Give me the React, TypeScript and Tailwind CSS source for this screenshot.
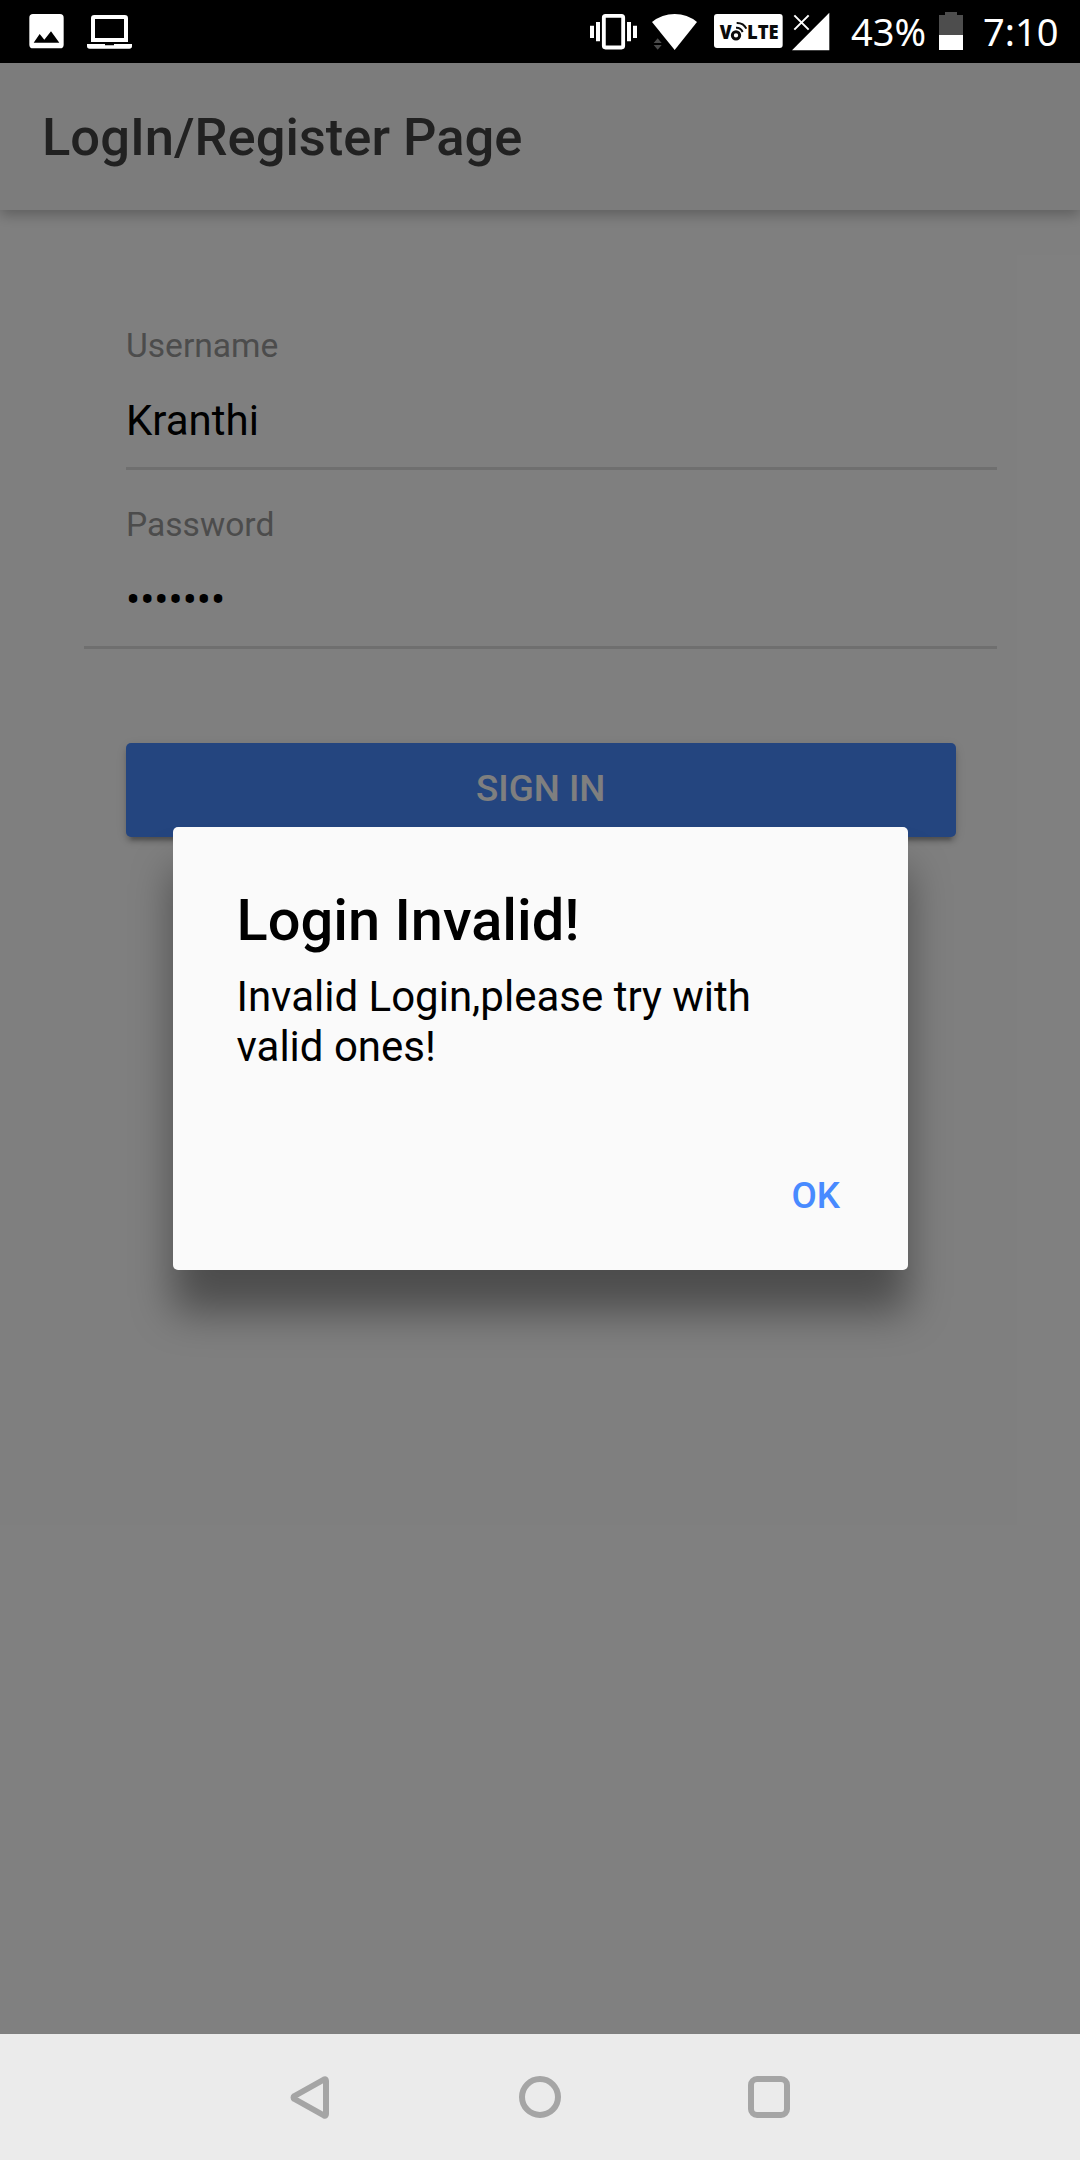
import type { ReactNode } from "react";

type GlyphProps = { viewBox: string; className: string; children: ReactNode };

function Glyph({ viewBox, className, children }: GlyphProps) {
  return (
    <svg viewBox={viewBox} className={`h-[63px] shrink-0 ${className}`} fill="#fff" aria-hidden="true">
      {children}
    </svg>
  );
}

function StatusBar() {
  return (
    <div className="flex h-[63px] items-center justify-between bg-black pl-[29px] pr-[21px] font-['Noto_Sans',sans-serif] text-[38px] leading-[63px] text-white">
      <div className="flex gap-[23px]">
        <Glyph viewBox="87 0 105 189" className="w-[35px]">
          <path
            fillRule="evenodd"
            d="M99 42H180Q191 42 191 53V134Q191 145 180 145H99Q88 145 88 134V53Q88 42 99 42ZM101 128H178L153 94L133 119L119 102Z"
          />
        </Glyph>
        <Glyph viewBox="261 0 135 189" className="w-[45px]">
          <path
            fillRule="evenodd"
            d="M283 45H374Q384 45 384 55V126H273V55Q273 45 283 45ZM285 57V114H372V57Z"
          />
          <path d="M261 132H315V136H342V132H396V138Q396 146 388 146H269Q261 146 261 138Z" />
        </Glyph>
      </div>
      <div className="flex">
        <Glyph viewBox="60 0 141 189" className="w-[47px]">
          <path d="M60 77h12v37h-12zM78 66h12v58h-12zM171 66h12v58h-12zM189 77h12v37h-12z" />
          <rect x="101.500" y="47.500" width="58" height="95" rx="5" fill="none" stroke="#fff" strokeWidth="11.500" />
        </Glyph>
        <Glyph viewBox="246 0 135 189" className="ml-[15px] w-[45px]">
          <path d="M246 66Q276 42 314 42Q352 42 381 66L314 150Z" />
          <path fill="#4a4a4a" stroke="#000" strokeWidth="3" paintOrder="stroke" d="M251 129L263 115L275 129ZM251 135H275L263 149Z" />
        </Glyph>
        <Glyph viewBox="432 0 207 189" className="ml-[17px] w-[69px]">
          <rect x="432" y="42" width="206" height="102" rx="9" />
          <g fill="#0b0b0b" fontFamily="Open Sans, sans-serif" fontWeight="800" fontSize="57">
            <text x="449" y="118" textLength="36" lengthAdjust="spacingAndGlyphs">V</text>
            <text x="531" y="118" textLength="95" lengthAdjust="spacingAndGlyphs">LTE</text>
          </g>
          <g fill="none" stroke="#0b0b0b">
            <circle cx="498" cy="106" r="11" strokeWidth="9" />
            <path strokeWidth="6" d="M498 83Q512 82 518 96M500 69Q520 68 529 86" />
          </g>
        </Glyph>
        <Glyph viewBox="666 0 114 189" className="ml-[9px] w-[38px]">
          <path d="M778 38V151H666Z" />
          <path fill="none" stroke="#fff" strokeWidth="6" d="M673 46L716 89M716 46L673 89" />
        </Glyph>
        <span className="ml-[21px] w-[76px]">43%</span>
        <Glyph viewBox="357 0 72 189" className="ml-[12px] w-[24px]">
          <path fill="#4d4d4d" d="M375 36H411V45H429V105H357V45H375Z" />
          <path d="M357 105h72v45h-72z" />
        </Glyph>
        <span className="ml-[20px] w-[76px]">7:10</span>
      </div>
    </div>
  );
}

function Field({ label, value }: { label: string; value: string }) {
  return (
    <div className="pb-[21px] pt-[35px]">
      <div className="text-[33.6px] leading-[40px] text-[#999]">{label}</div>
      <div className="mt-[30px] text-[42px] leading-[50px] text-black">{value}</div>
    </div>
  );
}

function LoginPage() {
  return (
    <>
      <header className="relative flex h-[147px] items-center bg-[#f8f8f8] px-[42px] pt-[2px] text-[52.5px] font-medium text-[#424242] shadow-[0_5px_13px_rgba(0,0,0,0.26)]">
        LogIn/Register Page
      </header>
      <main className="flex grow flex-col pl-[84px] pr-[83px] pt-[81px]">
        <div className="ml-[42px] border-b-[3px] border-[#dedede]">
          <Field label="Username" value="Kranthi" />
        </div>
        <div className="border-b-[3px] border-[#dedede] pl-[42px]">
          <Field label="Password" value="•••••••" />
        </div>
        <button className="ml-[42px] mr-[41.5px] mt-[94px] h-[94px] rounded-[5px] bg-[#488aff] pb-[2px] text-[36.75px] font-medium text-white shadow-[0_5px_5px_0_rgba(0,0,0,0.14),0_8px_3px_-5px_rgba(0,0,0,0.2),0_3px_13px_0_rgba(0,0,0,0.12)]">
          SIGN IN
        </button>
      </main>
    </>
  );
}

function Alert() {
  return (
    <div className="absolute inset-0 flex items-start bg-black/50 pl-[173px] pt-[764px]">
      <div
        role="alertdialog"
        className="flex h-[443px] w-[735px] flex-col rounded-[5px] bg-[#fafafa] pl-[63.5px] pr-[62.5px] pt-[59px] text-black shadow-[0_42px_42px_rgba(0,0,0,0.4)]"
      >
        <h2 className="text-[57.75px] font-medium leading-[68px]">Login Invalid!</h2>
        <p className="mt-[18px] text-[42px] leading-[50px]">Invalid Login,please try with valid ones!</p>
        <button className="mr-[5.5px] mt-[102px] self-end text-[36.75px] font-medium leading-[44px] text-[#488aff]">
          OK
        </button>
      </div>
    </div>
  );
}

function NavigationBar() {
  return (
    <nav className="flex h-[126px] items-center justify-center gap-[187px] bg-[#ebebeb] text-[#a5a5a5]">
      <svg className="h-[43px] w-[42px]" viewBox="0 0 42 43" fill="none" stroke="currentColor" strokeWidth="6" strokeLinejoin="round" aria-hidden="true">
        <path d="M4.500 20Q2.500 21.500 4.500 23L34 39.500Q36 40.500 36 38V5Q36 2.500 34 3.500Z" />
      </svg>
      <svg className="size-[42px]" viewBox="0 0 42 42" fill="none" stroke="currentColor" strokeWidth="6" aria-hidden="true">
        <circle cx="21" cy="21" r="18" />
      </svg>
      <svg className="size-[42px]" viewBox="0 0 42 42" fill="none" stroke="currentColor" strokeWidth="6" aria-hidden="true">
        <rect x="3" y="3" width="36" height="36" rx="6" />
      </svg>
    </nav>
  );
}

export default function App() {
  return (
    <div className="flex h-[2160px] w-[1080px] flex-col overflow-hidden font-[Roboto,sans-serif]">
      <StatusBar />
      <div className="relative flex grow flex-col overflow-hidden bg-white">
        <LoginPage />
        <Alert />
      </div>
      <NavigationBar />
    </div>
  );
}
